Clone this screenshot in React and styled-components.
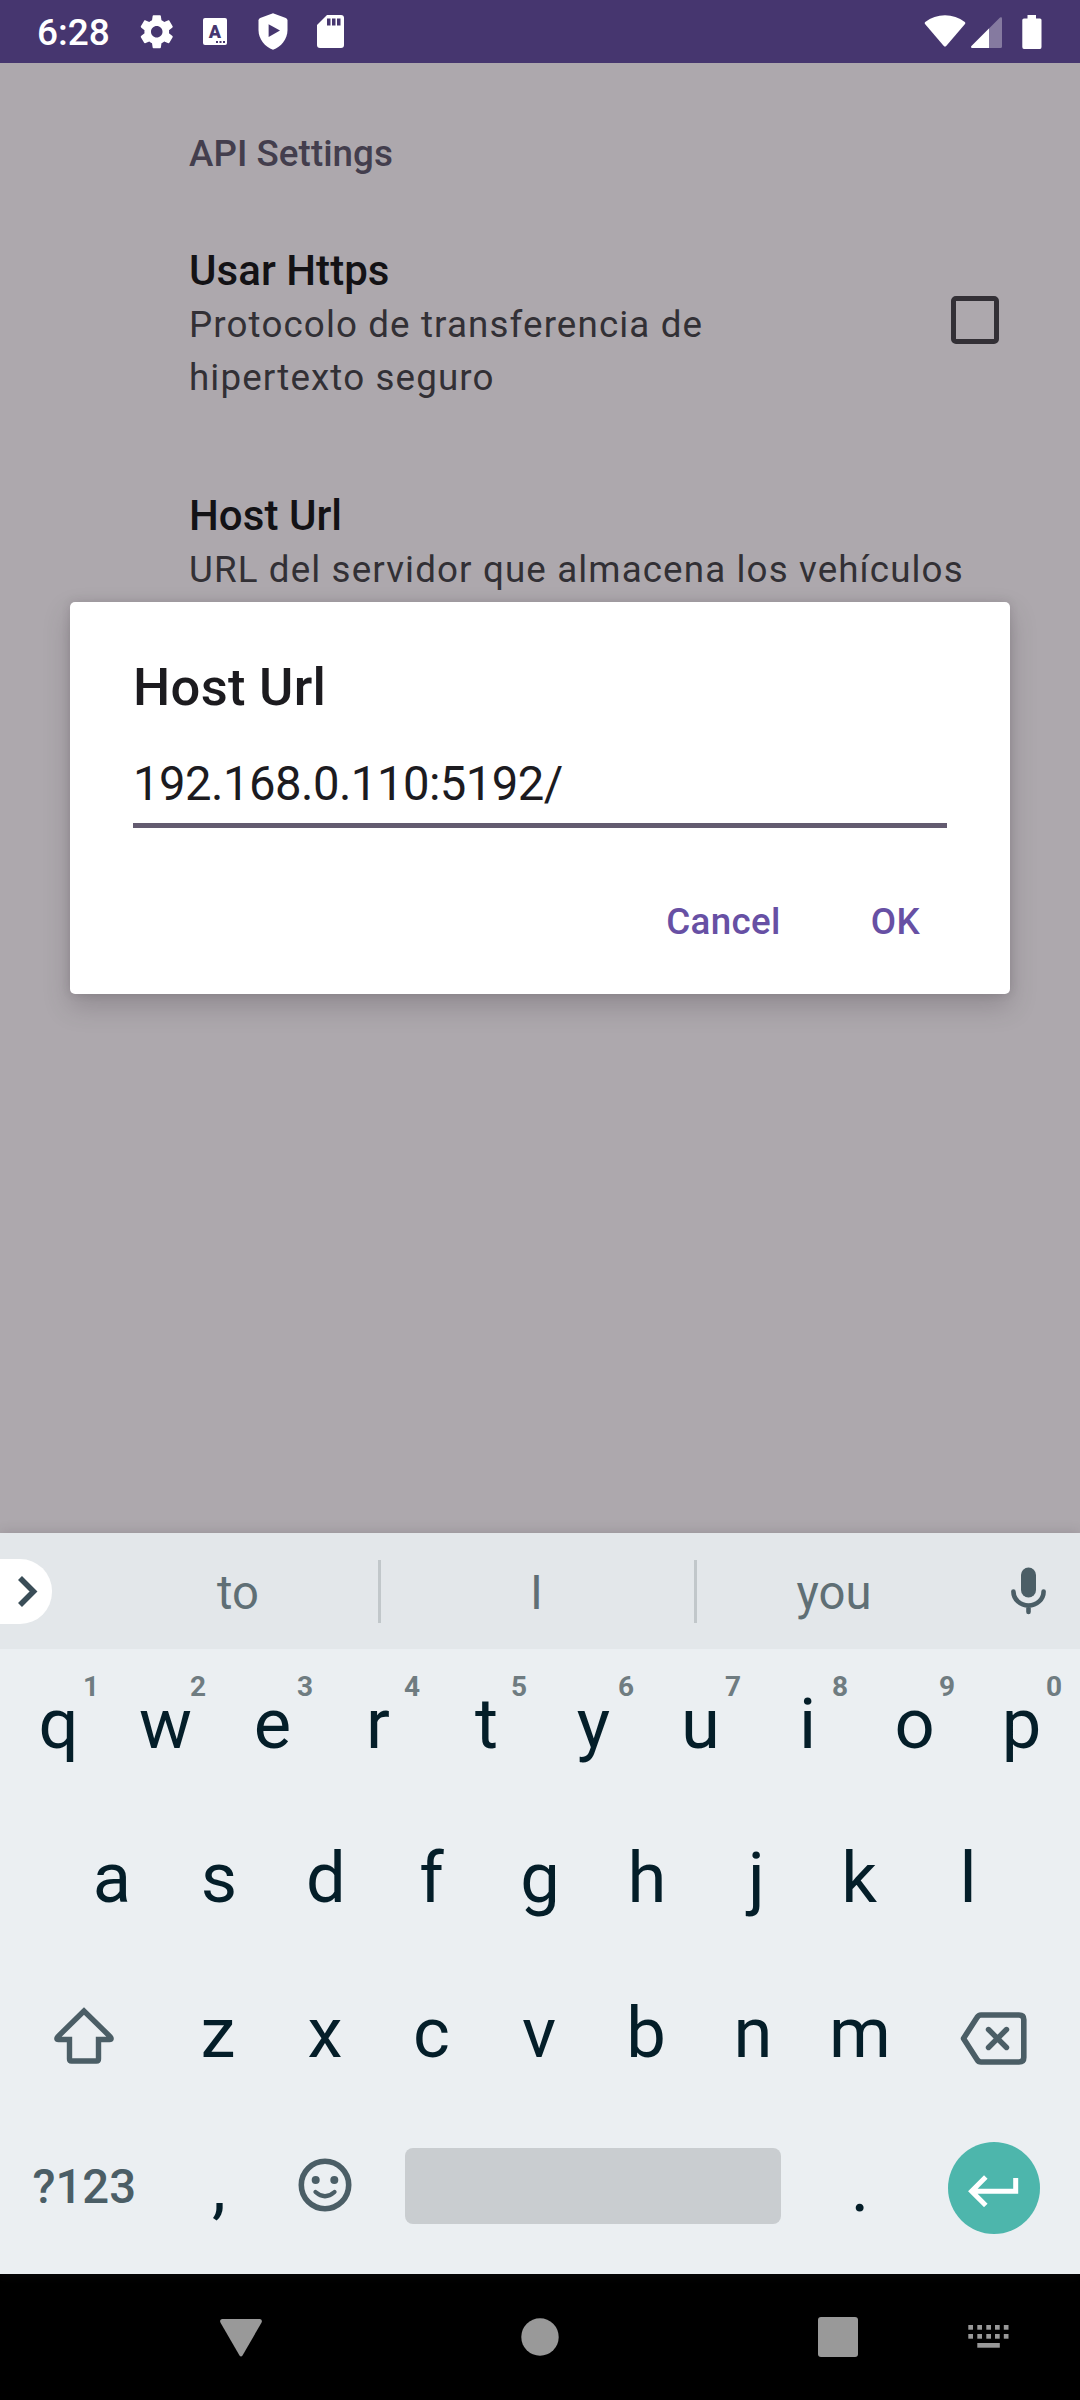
import React from "react";
import styled, { createGlobalStyle } from "styled-components";

const GlobalStyle = createGlobalStyle`
  * { box-sizing: border-box; }
  body { margin: 0; font-family: Roboto, "Noto Sans", sans-serif; }
  svg { display: block; flex: none; }
`;

const Screen = styled.div`
  width: 1080px;
  height: 2400px;
  display: flex;
  flex-direction: column;
  overflow: hidden;
  background: #ada8ad;
`;

/* Status bar */
const StatusBar = styled.header`
  height: 63px;
  flex: none;
  display: flex;
  align-items: center;
  justify-content: space-between;
  padding: 0 38px 0 37px;
  background: #46366f;
  color: #fff;
`;
const StatusGroup = styled.div`
  display: flex;
  align-items: center;
`;
const Clock = styled.span`
  width: 100px;
  font-size: 37px;
  font-weight: 500;
  line-height: 44px;
  padding-top: 2px;
`;

/* Settings list */
const Settings = styled.main`
  position: relative;
  flex: none;
  height: 1470px;
  padding-left: 189px;
`;
const Category = styled.h2`
  margin: 0;
  padding-top: 64px;
  font-size: 36.75px;
  font-weight: 500;
  line-height: 53px;
  letter-spacing: 0.05px;
  color: #433e4d;
`;
const Preference = styled.section`
  display: flex;
  align-items: center;
  justify-content: space-between;
  margin-top: ${(p) => p.$gap}px;
  padding-right: ${(p) => p.$end}px;
`;
const PrefText = styled.div`
  width: ${(p) => p.$width}px;
`;
const PrefTitle = styled.div`
  font-size: 42px;
  font-weight: 500;
  line-height: 56px;
  letter-spacing: 0.05px;
  color: #131215;
`;
const PrefSummary = styled.div`
  margin-top: -1px;
  font-size: 36.75px;
  line-height: 53px;
  letter-spacing: 1.12px;
  color: #323035;
`;
const Checkbox = styled.div`
  width: 48px;
  height: 48px;
  border: 5px solid #333036;
  border-radius: 5px;
  margin-top: -8px;
`;

/* Dialog floating over the settings */
const Dialog = styled.div`
  position: absolute;
  left: 70px;
  top: 539px;
  width: 940px;
  height: 392px;
  padding: 54px 63px 0;
  border-radius: 5px;
  background: #fff;
  box-shadow: 0 12px 26px rgba(60, 50, 60, 0.25), 0 0 9px rgba(60, 50, 60, 0.16);
`;
const DialogTitle = styled.h1`
  margin: 0;
  font-size: 52.5px;
  font-weight: 500;
  line-height: 62px;
  letter-spacing: 0.3px;
  color: #1c1b1f;
`;
const UrlField = styled.div`
  margin-top: 36px;
  height: 74px;
  border-bottom: 5px solid #635b70;
  font-size: 47.25px;
  line-height: 60px;
  letter-spacing: -0.54px;
  color: #1c1b1f;
`;
const Actions = styled.div`
  display: flex;
  justify-content: flex-end;
  gap: 90px;
  margin-top: 69px;
  padding-right: 27px;
`;
const Action = styled.button`
  padding: 0;
  border: 0;
  background: none;
  font: 500 36.75px/50px Roboto, sans-serif;
  letter-spacing: 0.35px;
  color: #6750a4;
`;

/* Keyboard */
const Keyboard = styled.div`
  position: relative;
  flex: none;
  height: 741px;
  background: #ebeff2;
  box-shadow: 0 0 12px rgba(60, 50, 60, 0.2);
`;
const Suggestions = styled.div`
  height: 116px;
  display: flex;
  align-items: center;
  background: #e3e7ea;
`;
const Expand = styled.div`
  width: 52px;
  height: 65px;
  padding: 16px 0 0 17px;
  border-radius: 0 32px 32px 0;
  background: #fff;
`;
const Word = styled.div`
  width: ${(p) => p.$width}px;
  padding: 4px ${(p) => p.$end || 0}px 0 ${(p) => p.$start || 0}px;
  text-align: center;
  font-size: 47.25px;
  line-height: 56px;
  color: #5f6f75;
`;
const Divider = styled.div`
  width: 3px;
  height: 63px;
  background: #c1c7ca;
`;
const MicButton = styled.div`
  padding-left: 89px;
`;
const KeyRow = styled.div`
  display: flex;
  justify-content: center;
  height: 154.5px;
  padding-right: ${(p) => p.$end || 0}px;
`;
const Key = styled.div`
  position: relative;
  width: ${(p) => p.$width || 107}px;
  display: flex;
  align-items: center;
  justify-content: center;
  padding: ${(p) => p.$drop || 0}px ${(p) => p.$right || 0}px
    ${(p) => (p.$lift === undefined ? 5 : p.$lift)}px ${(p) => p.$left || 0}px;
  font-size: 70.5px;
  line-height: 84px;
  color: #041e29;
`;
const Hint = styled.span`
  position: absolute;
  top: 21px;
  left: 78px;
  font-size: 28px;
  font-weight: 700;
  line-height: 34px;
  color: #6f7c81;
`;
const SymbolKey = styled(Key)`
  font-size: 47.25px;
  font-weight: 500;
  color: #4b5e66;
`;
const SpaceBar = styled.div`
  width: 376px;
  height: 76px;
  border-radius: 8px;
  background: #c9cdd0;
`;
const EnterButton = styled.div`
  width: 92px;
  height: 92px;
  display: flex;
  align-items: center;
  justify-content: center;
  border-radius: 50%;
  background: #4db6ac;
`;

/* Navigation bar */
const NavBar = styled.nav`
  height: 126px;
  flex: none;
  display: flex;
  align-items: center;
  padding-left: 220px;
  background: #000;
`;
const NavItem = styled.div`
  width: ${(p) => p.$width}px;
  padding-top: ${(p) => p.$drop || 0}px;
`;

/* Status bar icons */
const StatusSvg = styled.svg`
  margin-right: ${(p) => p.$gap || 0}px;
  margin-top: ${(p) => p.$drop || 0}px;
`;

const GearIcon = () => (
  <StatusSvg $gap={26} width="39.5" height="39.5" viewBox="0 0 24 24" fill="#fff">
    <path d="M19.43 12.98c.04-.32.07-.64.07-.98s-.03-.66-.07-.98l2.11-1.65c.19-.15.24-.42.12-.64l-2-3.46c-.12-.22-.39-.3-.61-.22l-2.49 1c-.52-.4-1.08-.73-1.69-.98l-.38-2.65C14.46 2.18 14.25 2 14 2h-4c-.25 0-.46.18-.49.42l-.38 2.65c-.61.25-1.17.59-1.69.98l-2.49-1c-.23-.09-.49 0-.61.22l-2 3.46c-.13.22-.07.49.12.64l2.11 1.65c-.04.32-.07.65-.07.98s.03.66.07.98l-2.11 1.65c-.19.15-.24.42-.12.64l2 3.46c.12.22.39.3.61.22l2.49-1c.52.4 1.08.73 1.69.98l.38 2.65c.03.24.24.42.49.42h4c.25 0 .46-.18.49-.42l.38-2.65c.61-.25 1.17-.59 1.69-.98l2.49 1c.23.09.49 0 .61-.22l2-3.46c.12-.22.07-.49-.12-.64l-2.11-1.65zM12 15.5c-1.93 0-3.5-1.57-3.5-3.5s1.57-3.5 3.5-3.5 3.5 1.57 3.5 3.5-1.57 3.5-3.5 3.5z" />
  </StatusSvg>
);

const LetterIcon = () => (
  <StatusSvg $gap={31} width="24" height="27" viewBox="0 0 24 27">
    <rect width="24" height="27" rx="2" fill="#fff" />
    <text x="12" y="19.7" textAnchor="middle" fontFamily="Roboto" fontWeight="900" fontSize="18" fill="#46366f">A</text>
    <path d="M13 23h2v2h-2zM16.5 23h2v2h-2zM20 23h2v2h-2z" fill="#46366f" />
  </StatusSvg>
);

const ShieldIcon = () => (
  <StatusSvg $gap={29.5} width="30" height="37" viewBox="0 0 30 37">
    <path d="M15 .3 27.800 5.100Q29.500 5.800 29.500 7.600V17C29.500 26.200 23 34 15 36.700C7 34 .5 26.200 .5 17V7.600Q.5 5.800 2.200 5.100z" fill="#fff" />
    <path d="M10.600 11.200v12.800l11.400-6.400z" fill="#46366f" />
  </StatusSvg>
);

const SdIcon = () => (
  <StatusSvg width="27" height="33" viewBox="0 0 27 33">
    <path d="M10 0H24Q27 0 27 3V30Q27 33 24 33H3Q0 33 0 30V10z" fill="#fff" />
    <path d="M10 3.500h3.500v7h-3.500zM15 3.500h3.500v7H15zM20 3.500h3.500v7H20z" fill="#46366f" />
  </StatusSvg>
);

const WifiIcon = () => (
  <StatusSvg $gap={5} width="42" height="33" viewBox="0 0 42 33">
    <path d="M1.200 7Q10 .3 21 .3T40.800 7Q41.800 8 41 9L22.200 31Q21 32.200 19.800 31L1 9Q.2 8 1.200 7z" fill="#fff" />
  </StatusSvg>
);

const SignalIcon = () => (
  <StatusSvg $gap={20} $drop={1} width="31" height="31" viewBox="0 0 31 31">
    <path d="M0 29.500 29 .5Q31-.5 31 1.500V29.500Q31 31 29.500 31H1Q-.5 31 0 29.500z" fill="#fff" fillOpacity=".34" />
    <path d="M.5 29 18 11.500V31H1Q-.5 30.500 .5 29z" fill="#fff" />
  </StatusSvg>
);

const BatteryIcon = () => (
  <StatusSvg width="20" height="34" viewBox="0 0 20 34">
    <path d="M5.500 0h8.500v3.500H18Q19.500 3.500 19.500 5V32Q19.500 34 18 34H2Q.3 34 .3 32V5Q.3 3.500 2 3.500h3.500z" fill="#fff" />
  </StatusSvg>
);

/* Keyboard icons */
const ChevronIcon = () => (
  <svg width="21" height="33" viewBox="0 0 21 33">
    <path d="M3 3 16.500 16.500 3 30" fill="none" stroke="#3a4d57" strokeWidth="5.600" />
  </svg>
);

const MicIcon = () => (
  <svg width="35" height="48" viewBox="0 0 35 48">
    <rect x="10" y=".5" width="15" height="30" rx="7.500" fill="#4b5e66" />
    <path d="M2.400 24.500a15.100 14 0 0 0 30.200 0M17.500 38.500V45" fill="none" stroke="#4b5e66" strokeWidth="4.600" strokeLinecap="round" />
  </svg>
);

const ShiftIcon = () => (
  <svg width="60" height="58" viewBox="0 0 60 58">
    <path d="M30 4 4 29.500Q1.500 32.500 4.500 32.500H15.500V52Q15.500 54 17.500 54H42.500Q44.500 54 44.500 52V32.500H55.500Q58.500 32.500 56 29.500z" fill="none" stroke="#4b5e66" strokeWidth="5.400" />
  </svg>
);

const BackspaceIcon = () => (
  <svg width="67" height="53" viewBox="0 0 67 53">
    <path d="M3.500 26.500 17 5.500Q18.500 3 21 3H59Q63.800 3 63.800 7.500V45.500Q63.800 50 59 50H21Q18.500 50 17 47.500z" fill="none" stroke="#4b5e66" strokeWidth="5.600" strokeLinejoin="round" />
    <path d="M28.500 17.500 46.500 35.500M46.500 17.500 28.500 35.500" stroke="#4b5e66" strokeWidth="5.400" strokeLinecap="round" />
  </svg>
);

const SmileIcon = () => (
  <svg width="54" height="54" viewBox="0 0 54 54">
    <circle cx="27" cy="27" r="23.700" fill="none" stroke="#4b5e66" strokeWidth="5.600" />
    <circle cx="17.700" cy="22" r="4" fill="#4b5e66" />
    <circle cx="36.300" cy="22" r="4" fill="#4b5e66" />
    <path d="M17.500 34q9.500 8.500 19 0" fill="none" stroke="#4b5e66" strokeWidth="4.300" strokeLinecap="round" />
  </svg>
);

const EnterSvg = styled.svg`
  margin-top: 6px;
`;
const EnterIcon = () => (
  <EnterSvg width="51" height="32" viewBox="0 0 51 32">
    <path d="M47.700 3V16.200H4M17.800 2 3.600 16.200 17.800 30.400" fill="none" stroke="#fff" strokeWidth="5" />
  </EnterSvg>
);

/* Navigation icons */
const TriangleIcon = () => (
  <svg width="42" height="38" viewBox="0 0 42 38">
    <path d="M2 0H40Q43 1 41.300 4L22.500 36.500Q21 38.500 19.500 36.500L.7 4Q-1 1 2 0z" fill="#999" />
  </svg>
);

const CircleIcon = () => (
  <svg width="38" height="38" viewBox="0 0 38 38">
    <circle cx="19" cy="19" r="18.700" fill="#999" />
  </svg>
);

const SquareIcon = () => (
  <svg width="40" height="40" viewBox="0 0 40 40">
    <rect width="40" height="40" rx="3" fill="#999" />
  </svg>
);

const ImeIcon = () => (
  <svg width="41" height="24" viewBox="0 0 41 24" fill="#999">
    {[0, 9].map((y) =>
      [0, 9, 18, 26.7, 35.5].map((x) => (
        <rect key={x + "-" + y} x={x + 0.3} y={y} width="4.700" height="4.700" />
      ))
    )}
    <rect x="9.300" y="18" width="22.500" height="4.700" />
  </svg>
);

const topRow = "qwertyuiop".split("");
const homeRow = "asdfghjkl".split("");
const bottomRow = "zxcvbnm".split("");

/* Optical centring of asymmetric letters: extra padding that pushes left or right */
const padRight = { r: 3, f: 3, k: 4, c: 1 };
const padLeft = { j: 5 };

export default function App() {
  return (
    <Screen>
      <GlobalStyle />
      <StatusBar>
        <StatusGroup>
          <Clock>6:28</Clock>
          <GearIcon />
          <LetterIcon />
          <ShieldIcon />
          <SdIcon />
        </StatusGroup>
        <StatusGroup>
          <WifiIcon />
          <SignalIcon />
          <BatteryIcon />
        </StatusGroup>
      </StatusBar>

      <Settings>
        <Category>API Settings</Category>
        <Preference $gap={63} $end={81}>
          <PrefText $width={600}>
            <PrefTitle>Usar Https</PrefTitle>
            <PrefSummary>Protocolo de transferencia de hipertexto seguro</PrefSummary>
          </PrefText>
          <Checkbox />
        </Preference>
        <Preference $gap={84} $end={42}>
          <PrefText $width={849}>
            <PrefTitle>Host Url</PrefTitle>
            <PrefSummary>URL del servidor que almacena los vehículos</PrefSummary>
          </PrefText>
        </Preference>
        <Dialog>
          <DialogTitle>Host Url</DialogTitle>
          <UrlField>192.168.0.110:5192/</UrlField>
          <Actions>
            <Action>Cancel</Action>
            <Action>OK</Action>
          </Actions>
        </Dialog>
      </Settings>

      <Keyboard>
        <Suggestions>
          <Expand>
            <ChevronIcon />
          </Expand>
          <Word $width={326} $start={46}>to</Word>
          <Divider />
          <Word $width={313} $end={2}>I</Word>
          <Divider />
          <Word $width={225} $start={49}>you</Word>
          <MicButton>
            <MicIcon />
          </MicButton>
        </Suggestions>
        <KeyRow>
          {topRow.map((c, i) => (
            <Key key={c} $right={padRight[c]}>
              {c}
              <Hint>{(i + 1) % 10}</Hint>
            </Key>
          ))}
        </KeyRow>
        <KeyRow>
          {homeRow.map((c) => (
            <Key key={c} $right={padRight[c]} $left={padLeft[c]}>
              {c}
            </Key>
          ))}
        </KeyRow>
        <KeyRow $end={2}>
          <Key $width={160.5} $drop={1} $lift={0}>
            <ShiftIcon />
          </Key>
          {bottomRow.map((c) => (
            <Key key={c} $right={padRight[c]}>
              {c}
            </Key>
          ))}
          <Key $width={160.5} $drop={6} $lift={0}>
            <BackspaceIcon />
          </Key>
        </KeyRow>
        <KeyRow $end={2}>
          <SymbolKey $width={160.5}>?123</SymbolKey>
          <Key $left={2}>,</Key>
          <Key $lift={9}>
            <SmileIcon />
          </Key>
          <Key $width={428} $lift={7}>
            <SpaceBar />
          </Key>
          <Key>.</Key>
          <Key $width={160.5} $lift={3}>
            <EnterButton>
              <EnterIcon />
            </EnterButton>
          </Key>
        </KeyRow>
      </Keyboard>

      <NavBar>
        <NavItem $width={301} $drop={2}>
          <TriangleIcon />
        </NavItem>
        <NavItem $width={297}>
          <CircleIcon />
        </NavItem>
        <NavItem $width={150}>
          <SquareIcon />
        </NavItem>
        <NavItem $width={41}>
          <ImeIcon />
        </NavItem>
      </NavBar>
    </Screen>
  );
}
